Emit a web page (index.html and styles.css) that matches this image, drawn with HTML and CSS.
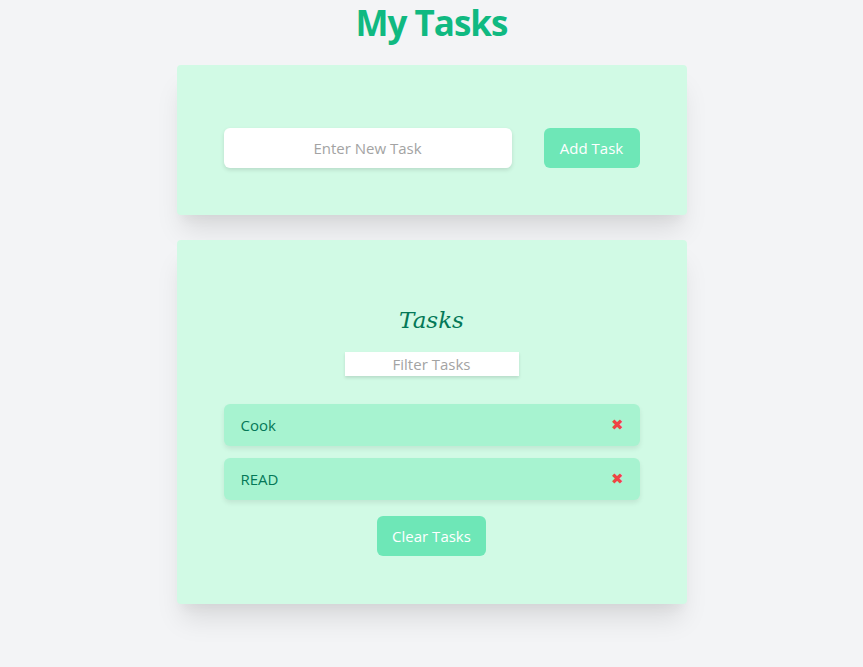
FILE: index.html
```html
<!DOCTYPE html>
<html lang="en">
<head>
<meta charset="utf-8">
<title>My Tasks</title>
<link rel="stylesheet" href="styles.css">
</head>
<body>
<h1 class="title">My Tasks</h1>
<main class="wrap">
  <section class="card">
    <form class="add-form">
      <input class="task-input" type="text" placeholder="Enter New Task">
      <button class="btn" type="button">Add Task</button>
    </form>
  </section>
  <section class="card card-list">
    <h2 class="list-title">Tasks</h2>
    <input class="filter-input" type="text" placeholder="Filter Tasks">
    <ul class="tasks">
      <li class="task"><span>Cook</span><span class="del">&#x2716;</span></li>
      <li class="task"><span>READ</span><span class="del">&#x2716;</span></li>
    </ul>
    <button class="btn btn-clear" type="button">Clear Tasks</button>
  </section>
</main>
</body>
</html>
```

FILE: styles.css
```css
* { box-sizing: border-box; }
html, body { margin: 0; padding: 0; }
body {
  background: #f3f4f6;
  font-family: "Open Sans", "Noto Sans", sans-serif;
  font-size: 15px;
  min-height: 100vh;
  padding-bottom: 40px;
}
.title {
  margin: 0;
  padding-top: 1px;
  text-align: center;
  font-size: 35px;
  line-height: 43px;
  font-weight: 700;
  color: #10b981;
  letter-spacing: -1px;
}
.wrap {
  width: 510px;
  margin: 21px auto 0;
  display: flex;
  flex-direction: column;
  gap: 25px;
}
.card {
  background: #d1fae5;
  border-radius: 4px;
  padding: 63px 47px 47px;
  box-shadow: 0 20px 25px -5px rgba(0,0,0,0.1), 0 10px 10px -5px rgba(0,0,0,0.04);
}
.add-form {
  display: flex;
  justify-content: space-between;
  margin: 0;
}
.task-input {
  width: 288px;
  height: 40px;
  border: none;
  border-radius: 6px;
  background: #fff;
  text-align: center;
  font: inherit;
  color: #374151;
  box-shadow: 0 2px 4px rgba(0,0,0,0.12);
  outline: none;
}
.task-input::placeholder, .filter-input::placeholder { color: #a3a3a3; }
.btn {
  height: 40px;
  width: 96px;
  border: none;
  border-radius: 6px;
  background: #6ee7b7;
  color: #fff;
  font: inherit;
  padding: 0;
}
.card-list {
  display: flex;
  flex-direction: column;
  align-items: center;
  padding-top: 64px;
  padding-bottom: 48px;
}
.list-title {
  margin: 0;
  font-family: "DejaVu Serif", Georgia, serif;
  font-style: italic;
  font-weight: 400;
  font-size: 23px;
  line-height: 32px;
  color: #047857;
}
.filter-input {
  margin-top: 16px;
  width: 174px;
  height: 24px;
  border: none;
  background: #fff;
  text-align: center;
  font: inherit;
  box-shadow: 0 2px 3px rgba(0,0,0,0.12);
  outline: none;
}
.tasks {
  list-style: none;
  margin: 28px 0 0;
  padding: 0;
  width: 100%;
  display: flex;
  flex-direction: column;
  gap: 12px;
}
.task {
  height: 42px;
  background: #a7f3d0;
  border-radius: 6px;
  display: flex;
  align-items: center;
  justify-content: space-between;
  padding: 0 16px 0 17px;
  color: #047857;
  box-shadow: 0 3px 5px rgba(0,0,0,0.08);
}
.del {
  color: #ef4444;
  font-size: 15px;
  font-family: "DejaVu Sans", sans-serif;
}
.btn-clear {
  margin-top: 16px;
  width: 109px;
}
```
